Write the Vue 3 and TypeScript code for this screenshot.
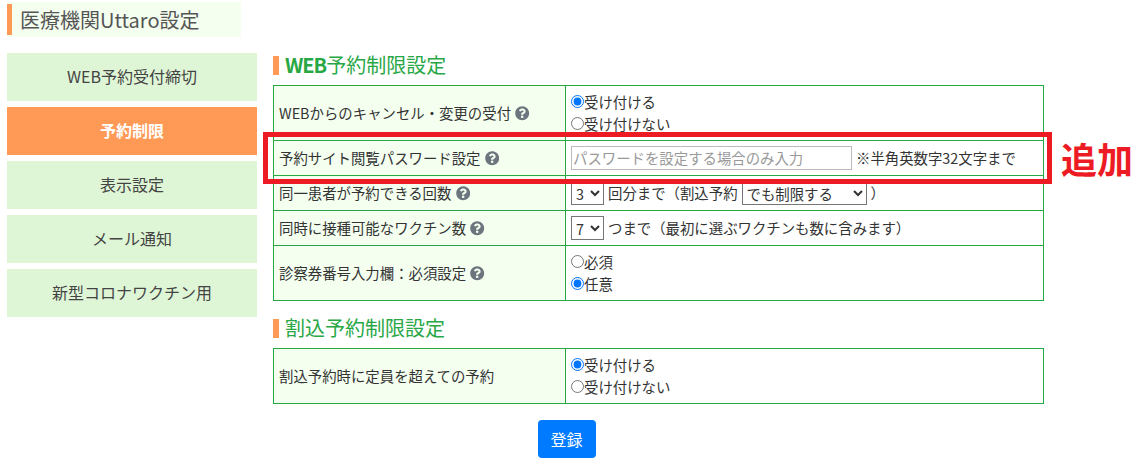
<script setup lang="ts">
import { ref } from 'vue'

const menu = ['WEB予約受付締切', '予約制限', '表示設定', 'メール通知', '新型コロナワクチン用']
const active = '予約制限'
const helpPath =
  'M504 256c0 136.997-111.043 248-248 248S8 392.997 8 256C8 119.083 119.043 8 256 8s248 111.083 248 248zM262.655 90c-54.497 0-89.255 22.957-116.549 63.758-3.536 5.286-2.353 12.415 2.715 16.258l34.699 26.31c5.205 3.947 12.621 3.008 16.665-2.122 17.864-22.658 30.113-35.797 57.303-35.797 20.429 0 45.698 13.148 45.698 32.958 0 14.976-12.363 22.667-32.534 33.976C247.128 238.528 216 254.941 216 296v4c0 6.627 5.373 12 12 12h56c6.627 0 12-5.373 12-12v-1.333c0-28.462 83.186-29.647 83.186-106.667 0-58.002-60.165-102-116.531-102zM256 338c-25.365 0-46 20.635-46 46 0 25.364 20.635 46 46 46s46-20.636 46-46c0-25.365-20.635-46-46-46z'

const cancel = ref('yes')
const card = ref('optional')
const over = ref('yes')
const times = ref('3')
const vaccines = ref('7')
const limit = ref('でも制限する')
</script>

<template>
  <div class="page">
    <h1 class="title">医療機関Uttaro設定</h1>
    <div class="layout">
      <nav class="menu">
        <a v-for="item in menu" :key="item" class="menu-item" :class="{ active: item === active }"><span>{{ item }}</span></a>
      </nav>
      <main class="main">
        <h2 class="heading first"><b>WEB</b>予約制限設定</h2>
        <table class="table">
          <colgroup><col class="c1" /><col /></colgroup>
          <tbody>
            <tr class="tall">
              <th>WEBからのキャンセル・変更の受付 <svg class="help" viewBox="0 0 512 512"><path :d="helpPath" /></svg></th>
              <td>
                <label class="radio"><input v-model="cancel" type="radio" value="yes" />受け付ける</label>
                <label class="radio"><input v-model="cancel" type="radio" value="no" />受け付けない</label>
              </td>
            </tr>
            <tr>
              <th>予約サイト閲覧パスワード設定 <svg class="help" viewBox="0 0 512 512"><path :d="helpPath" /></svg></th>
              <td class="inline">
                <input class="text" type="text" placeholder="パスワードを設定する場合のみ入力" />
                <span>※半角英数字32文字まで</span>
              </td>
            </tr>
            <tr>
              <th>同一患者が予約できる回数 <svg class="help" viewBox="0 0 512 512"><path :d="helpPath" /></svg></th>
              <td class="inline">
                <select v-model="times" class="sel num"><option>3</option></select>
                <span>回分まで（割込予約</span>
                <select v-model="limit" class="sel wide"><option>でも制限する</option></select>
                <span>）</span>
              </td>
            </tr>
            <tr>
              <th>同時に接種可能なワクチン数 <svg class="help" viewBox="0 0 512 512"><path :d="helpPath" /></svg></th>
              <td class="inline">
                <select v-model="vaccines" class="sel num"><option>7</option></select>
                <span>つまで（最初に選ぶワクチンも数に含みます）</span>
              </td>
            </tr>
            <tr class="tall">
              <th>診察券番号入力欄：必須設定 <svg class="help" viewBox="0 0 512 512"><path :d="helpPath" /></svg></th>
              <td>
                <label class="radio"><input v-model="card" type="radio" value="required" />必須</label>
                <label class="radio"><input v-model="card" type="radio" value="optional" />任意</label>
              </td>
            </tr>
          </tbody>
        </table>

        <h2 class="heading second">割込予約制限設定</h2>
        <table class="table">
          <colgroup><col class="c1" /><col /></colgroup>
          <tbody>
            <tr class="tall">
              <th>割込予約時に定員を超えての予約</th>
              <td>
                <label class="radio"><input v-model="over" type="radio" value="yes" />受け付ける</label>
                <label class="radio"><input v-model="over" type="radio" value="no" />受け付けない</label>
              </td>
            </tr>
          </tbody>
        </table>

        <div class="actions"><button class="submit" type="button">登録</button></div>

        <div class="marker"></div>
        <div class="marker-label">追加</div>
      </main>
    </div>
  </div>
</template>

<style>
html, body { margin: 0; background: #fff; }
</style>

<style scoped>
.page {
  width: 1147px;
  height: 465px;
  overflow: hidden;
  box-sizing: border-box;
  padding: 2px 7px 0;
  font-family: "Noto Sans CJK JP", "Noto Sans", sans-serif;
  color: #333;
  font-size: 14.4px;
}
.title {
  width: 234px;
  height: 35px;
  box-sizing: border-box;
  margin: 0 0 16px;
  padding-left: 13px;
  background: #f4fff0;
  font-size: 20px;
  font-weight: 400;
  line-height: 35px;
  color: #555;
  position: relative;
}
.title::before {
  content: "";
  position: absolute;
  left: 0;
  top: 2px;
  bottom: 2px;
  width: 5px;
  background: #ff9a56;
}
.layout {
  display: grid;
  grid-template-columns: 250px 772px;
  column-gap: 16px;
  align-items: start;
}
.menu {
  display: flex;
  flex-direction: column;
  gap: 6px;
}
.menu-item {
  height: 48px;
  display: flex;
  align-items: center;
  justify-content: center;
  padding-bottom: 2px;
  box-sizing: border-box;
  background: #dff6d6;
  color: #444;
  font-size: 16px;
}
.menu-item.active {
  background: #ff9a56;
  color: #fff;
  font-weight: 700;
}
.main { position: relative; }
.heading {
  height: 19px;
  margin: 0;
  padding-left: 6px;
  border-left: 6px solid #ff9a56;
  box-sizing: border-box;
  font-size: 20px;
  line-height: 17px;
  font-weight: 400;
  color: #28a745;
}
.heading b { letter-spacing: -1px; }
.heading.first { margin-top: 3px; margin-bottom: 10px; }
.heading.second { margin-top: 18px; margin-bottom: 10px; }
.table {
  width: 771px;
  border-collapse: collapse;
  table-layout: fixed;
}
.c1 { width: 292px; }
.table th,
.table td {
  border: 1px solid #28a745;
  height: 35px;
  padding: 0 5px;
  box-sizing: border-box;
}
.table tr.tall th,
.table tr.tall td { height: 55px; }
.table th {
  background: #f4fff0;
  font-weight: 400;
  text-align: left;
  padding-bottom: 2px;
}
.help {
  width: 14.4px;
  height: 14.4px;
  vertical-align: -2px;
  margin-left: 1px;
  fill: #6c757d;
}
.table td { padding-bottom: 2px; }
.radio {
  display: flex;
  align-items: center;
  height: 22px;
}
.radio input {
  margin: 0;
  width: 13px;
  height: 13px;
}
.inline > * { vertical-align: middle; }
.text {
  width: 281px;
  height: 24px;
  box-sizing: border-box;
  margin-right: 4px;
  padding: 1px 1px;
  border: 1px solid #bbb;
  font: inherit;
  color: #333;
}
.text::placeholder { color: #999; }
.sel {
  height: 24px;
  box-sizing: border-box;
  font: inherit;
  color: #333;
  background: #fff;
  padding: 0;
}
.num { width: 33px; margin-right: 4px; }
.wide { width: 125px; margin: 0 4px; }
.actions {
  display: flex;
  justify-content: center;
  width: 587px;
  margin-top: 16px;
}
.submit {
  width: 58px;
  height: 38px;
  border: 0;
  border-radius: 4px;
  background: #007bff;
  color: #fff;
  font: inherit;
  font-size: 16px;
}
.marker {
  position: absolute;
  left: -10px;
  top: 79px;
  width: 789px;
  height: 52px;
  box-sizing: border-box;
  border: 5px solid #ed1c24;
}
.marker-label {
  position: absolute;
  left: 788px;
  top: 83px;
  white-space: nowrap;
  font-size: 36px;
  line-height: 44px;
  font-weight: 700;
  color: #ed1c24;
}
</style>
